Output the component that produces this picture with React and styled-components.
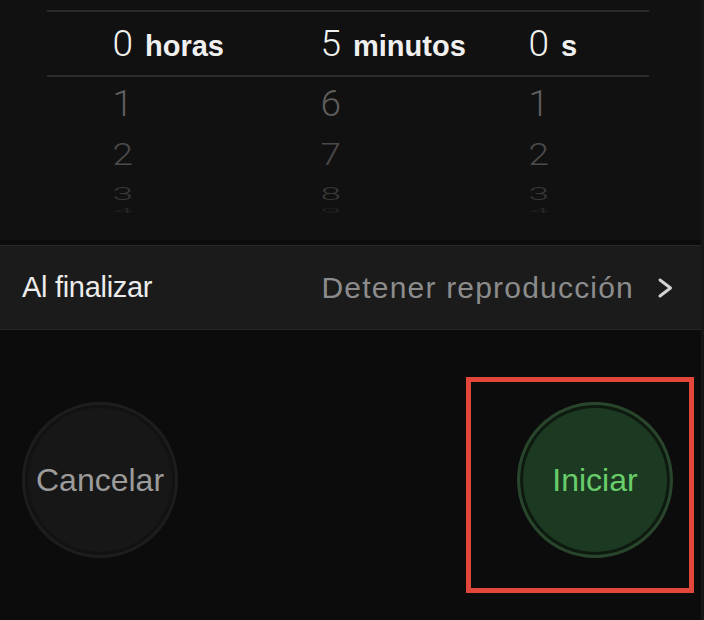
import React from 'react';
import styled, { createGlobalStyle } from 'styled-components';

const Global = createGlobalStyle`
    html, body {
        margin: 0;
        background: #0c0c0c;
    }
    body {
        font-family: "Liberation Sans", Arial, sans-serif;
        color: #e9e9e9;
    }
`

const Screen = styled.div`
    width: 704px;
    height: 620px;
    box-sizing: border-box;
    border-right: 3px solid #171717;
    display: flex;
    flex-direction: column;
    overflow: hidden;
`

const Picker = styled.div`
    background: #111111;
    padding-top: 10px;
    height: 240px;
    box-sizing: border-box;
`

const Divider = styled.div`
    height: 2px;
    margin: 0 52px 0 47px;
    background: #2b2b2b;
`

const Row = styled.div`
    display: grid;
    grid-template-columns: 208px 208px 1fr;
    align-items: center;
    height: ${p => p.$h}px;
    color: ${p => p.$color || '#f2f2f2'};
    transform: scaleY(${p => p.$squash || 1});
    transform-origin: center;
`

const Column = styled.div`
    display: flex;
    align-items: baseline;
    gap: 12px;
    min-width: 0;
`

const Digit = styled.span`
    flex: none;
    width: 133px;
    text-align: right;
    font-family: Roboto, "Liberation Sans", sans-serif;
    font-weight: 300;
    font-size: 37px;
    line-height: 1;
`

const Unit = styled.span`
    flex: none;
    font-weight: 700;
    font-size: 29px;
    line-height: 1;
    color: #f0f0f0;
`

const Band = styled.div`
    margin-top: 5px;
    height: 85px;
    box-sizing: border-box;
    background: #1b1b1b;
    border-top: 1px solid #272727;
    border-bottom: 1px solid #262626;
    display: flex;
    align-items: center;
    padding: 0 27px 0 22px;
`

const BandLabel = styled.span`
    font-size: 29px;
    color: #ececec;
    letter-spacing: -0.3px;
    flex: 1;
`

const BandValue = styled.span`
    font-size: 30px;
    letter-spacing: 1.2px;
    color: #8c8c8c;
    margin-right: 23px;
`

const Actions = styled.div`
    display: flex;
    justify-content: space-between;
    align-items: center;
    padding: 72px 28px 0 22px;
`

const RoundButton = styled.button`
    width: 156px;
    height: 156px;
    border-radius: 50%;
    box-sizing: border-box;
    border: 3px solid ${p => p.$ring};
    box-shadow: inset 0 0 0 3px ${p => p.$gap};
    background: ${p => p.$fill};
    color: ${p => p.$text};
    font-family: "Liberation Sans", Arial, sans-serif;
    font-size: 32px;
    padding: 0;
    display: flex;
    align-items: center;
    justify-content: center;
`

const Highlighted = styled.div`
    position: relative;
`

const Marker = styled.div`
    position: absolute;
    left: -51px;
    right: -21px;
    top: -25px;
    bottom: -35px;
    border: 5px solid #e3463a;
    pointer-events: none;
`

const Chevron = () => (
    <svg width="17" height="22" viewBox="0 0 17 22">
        <polyline points="3,3 13.5,11 3,19" fill="none" stroke="#d2d2d2" strokeWidth="3" strokeLinecap="round" strokeLinejoin="round"/>
    </svg>
)

const wheel = [
    { h: 52, color: '#5e5e5e', squash: 1, values: ['1', '6', '1'] },
    { h: 50, color: '#4a4a4a', squash: 0.85, values: ['2', '7', '2'] },
    { h: 22, color: '#383838', squash: 0.5, values: ['3', '8', '3'] },
    { h: 14, color: '#262626', squash: 0.2, values: ['4', '9', '4'] },
]

export default function App(){
    return <Screen>
        <Global/>
        <Picker>
            <Divider/>
            <Row $h={63}>
                <Column><Digit>0</Digit><Unit>horas</Unit></Column>
                <Column><Digit>5</Digit><Unit>minutos</Unit></Column>
                <Column><Digit>0</Digit><Unit>s</Unit></Column>
            </Row>
            <Divider/>
            {wheel.map((r, i) =>
                <Row key={i} $h={r.h} $color={r.color} $squash={r.squash}>
                    {r.values.map((v, j) => <Column key={j}><Digit>{v}</Digit></Column>)}
                </Row>
            )}
        </Picker>
        <Band>
            <BandLabel>Al finalizar</BandLabel>
            <BandValue>Detener reproducción</BandValue>
            <Chevron/>
        </Band>
        <Actions>
            <RoundButton $ring="#1d1d1d" $gap="#121212" $fill="#171717" $text="#9b9b9b">Cancelar</RoundButton>
            <Highlighted>
                <RoundButton $ring="#29462d" $gap="#0e1a10" $fill="#1c3a21" $text="#68cd6a">Iniciar</RoundButton>
                <Marker/>
            </Highlighted>
        </Actions>
    </Screen>
}
